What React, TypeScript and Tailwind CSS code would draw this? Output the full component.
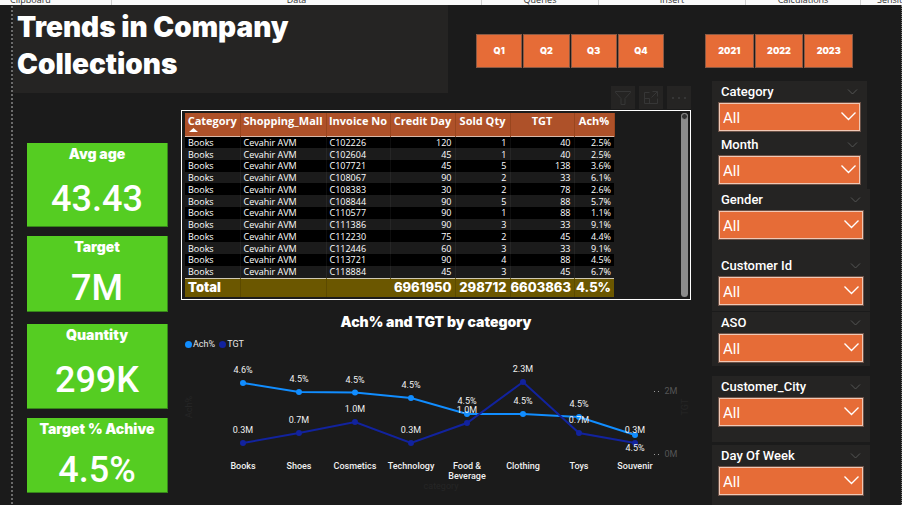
import React from "react";

const ribbonGroups = [
  { label: "Clipboard", box: "w-28 pl-[10px] border-r" },
  { label: "Data", box: "w-[370px] justify-center border-r" },
  { label: "Queries", box: "w-[117px] justify-center border-r" },
  { label: "Insert", box: "w-[147px] justify-center border-r" },
  { label: "Calculations", box: "w-[115px] justify-center border-r" },
  { label: "Sensitivity", box: "flex-1 pl-4" },
];

const cards = [
  { label: "Avg age", value: "43.43", box: "h-[84px]", gap: "pt-[10px]" },
  { label: "Target", value: "7M", box: "mt-[9px] h-[76px]", gap: "pt-[6px]" },
  { label: "Quantity", value: "299K", box: "mt-3 h-[85px]", gap: "pt-[10px]" },
  { label: "Target % Achive", value: "4.5%", box: "mt-[9px] h-[75px]", gap: "pt-[6px]" },
];

const filters = [
  { label: "Category", panel: "w-[155px] pb-[3px]" },
  { label: "Month", panel: "w-[155px] pb-[5px]" },
  { label: "Gender", panel: "w-[158px] pb-4" },
  { label: "Customer Id", panel: "w-[158px] pb-[6px]" },
  { label: "ASO", panel: "mt-px w-[158px] pb-1" },
  { label: "Customer_City", panel: "mt-[10px] w-[158px] pb-4" },
  { label: "Day Of Week", panel: "mt-[3px] w-[158px] pb-[10px]" },
];

const rows: [string, number, number, number, string][] = [
  ["C102226", 120, 1, 40, "2.5%"],
  ["C102604", 45, 1, 40, "2.5%"],
  ["C107721", 45, 5, 138, "3.6%"],
  ["C108067", 90, 2, 33, "6.1%"],
  ["C108383", 30, 2, 78, "2.6%"],
  ["C108844", 90, 5, 88, "5.7%"],
  ["C110577", 90, 1, 88, "1.1%"],
  ["C111386", 90, 3, 33, "9.1%"],
  ["C112230", 75, 2, 45, "4.4%"],
  ["C112446", 60, 3, 33, "9.1%"],
  ["C113721", 90, 4, 88, "4.5%"],
  ["C118884", 45, 3, 45, "6.7%"],
];

type Point = { name: string[]; x: number; ach: number; achLabel: string; achY: number; tgt: number; tgtLabel: string; tgtY: number };

const points: Point[] = [
  { name: ["Books"], x: 62, ach: 31, achLabel: "4.6%", achY: 21, tgt: 91, tgtLabel: "0.3M", tgtY: 81 },
  { name: ["Shoes"], x: 118, ach: 40, achLabel: "4.5%", achY: 30, tgt: 81, tgtLabel: "0.7M", tgtY: 71 },
  { name: ["Cosmetics"], x: 174, ach: 40.5, achLabel: "4.5%", achY: 31, tgt: 70, tgtLabel: "1.0M", tgtY: 60 },
  { name: ["Technology"], x: 230, ach: 46, achLabel: "4.5%", achY: 36, tgt: 91, tgtLabel: "0.3M", tgtY: 81 },
  { name: ["Food &", "Beverage"], x: 286, ach: 62, achLabel: "4.5%", achY: 52, tgt: 71, tgtLabel: "1.0M", tgtY: 61 },
  { name: ["Clothing"], x: 342, ach: 62, achLabel: "4.5%", achY: 52, tgt: 30, tgtLabel: "2.3M", tgtY: 20 },
  { name: ["Toys"], x: 398, ach: 65, achLabel: "4.5%", achY: 55, tgt: 81, tgtLabel: "0.7M", tgtY: 71 },
  { name: ["Souvenir"], x: 454, ach: 83, achLabel: "4.5%", achY: 99, tgt: 91, tgtLabel: "0.3M", tgtY: 81 },
];

function Ribbon() {
  return (
    <header className="flex h-[5px] items-end overflow-hidden bg-[#fafafa] font-['Open_Sans',sans-serif] text-[9px] leading-[10px] text-[#333]">
      {ribbonGroups.map((g) => (
        <div key={g.label} className={`flex shrink-0 whitespace-nowrap border-[#cfcfcf] ${g.box}`}>
          {g.label}
        </div>
      ))}
    </header>
  );
}

function Tile({ label }: { label: string }) {
  return (
    <button className="h-[34px] border border-[#8a5a45] bg-[#e66c37] font-['Inter',sans-serif] text-[9px] font-black text-white">
      {label}
    </button>
  );
}

function VisualActions() {
  const box = "flex h-[23px] w-6 items-center justify-center bg-[#252423]";
  return (
    <div className="mr-[14px] flex gap-1 self-end text-[#363636]">
      <button className={box} aria-label="Filters">
        <svg width="18" height="16" viewBox="0 0 18 16" fill="none" stroke="currentColor">
          <path d="M1.5 1.5h15v1L11 8.500v6H7v-6L1.500 2.500z" />
        </svg>
      </button>
      <button className={box} aria-label="Focus mode">
        <svg width="16" height="16" viewBox="0 0 16 16" fill="none" stroke="currentColor">
          <path d="M6.500 2.500h-5v11h13v-5M1.500 8.500h5v5M9.500 1.500h5v5M14.500 1.500l-6 6" />
        </svg>
      </button>
      <button className={box} aria-label="More options">
        <svg width="16" height="4" viewBox="0 0 16 4" fill="currentColor">
          <rect x="1" y="1" width="2" height="2" />
          <rect x="7" y="1" width="2" height="2" />
          <rect x="13" y="1" width="2" height="2" />
        </svg>
      </button>
    </div>
  );
}

function Card({ label, value, box, gap }: { label: string; value: string; box: string; gap: string }) {
  return (
    <div className={`border-b border-r border-[#37861a] bg-[#55cd22] text-center text-white ${box}`}>
      <h3 className="whitespace-nowrap font-['Inter',sans-serif] text-[14px] font-black leading-[21px]">{label}</h3>
      <p className={`font-['Roboto',sans-serif] text-[36px] font-medium leading-[51px] ${gap}`}>{value}</p>
    </div>
  );
}

function CollectionsTable() {
  const num = "pr-[3px] text-right";
  const line = "border-r border-white/5";
  return (
    <section className="mr-[14px] flex h-[190px] justify-between border border-white py-[2px] pl-[3px] pr-[2px]">
      <table className="h-[184px] w-[429px] table-fixed border-collapse font-['Open_Sans',sans-serif] text-white">
        <colgroup>
          <col className="w-[55px]" />
          <col className="w-[86px]" />
          <col className="w-[64px]" />
          <col className="w-[65px]" />
          <col className="w-[55px]" />
          <col className="w-[64px]" />
          <col className="w-[40px]" />
        </colgroup>
        <thead>
          <tr className="h-[23px] whitespace-nowrap border-b border-[#d9b8a8] bg-[#ae5129] align-top text-[11px] leading-[15px]">
            {["Category", "Shopping_Mall", "Invoice No", "Credit Day", "Sold Qty", "TGT", "Ach%"].map((h, i) => (
              <th key={h} scope="col" className="border-r border-[#99461f] px-[2px] font-bold">
                {h}
                {i === 0 && (
                  <svg className="ml-[2px] block" width="9" height="4" viewBox="0 0 9 4" fill="white">
                    <path d="M0 4L4.500 0L9 4z" />
                  </svg>
                )}
              </th>
            ))}
          </tr>
        </thead>
        <tbody className="text-[9px] font-medium leading-[11px]">
          {rows.map(([invoice, days, qty, tgt, ach]) => (
            <tr key={invoice} className="odd:bg-black">
              <td className={`pl-[3px] ${line}`}>Books</td>
              <td className={`pl-[3px] ${line}`}>Cevahir AVM</td>
              <td className={`pl-[3px] ${line}`}>{invoice}</td>
              <td className={`${num} ${line}`}>{days}</td>
              <td className={`${num} ${line}`}>{qty}</td>
              <td className={`${num} ${line}`}>{tgt}</td>
              <td className={num}>{ach}</td>
            </tr>
          ))}
        </tbody>
        <tfoot>
          <tr className="h-[19px] border-t border-[#cfc9b4] bg-[#6b5700] font-['Inter',sans-serif] text-[13px] leading-[17px]">
            <th scope="row" className="border-r border-[#5c4a00] pl-[3px] text-left font-black">Total</th>
            <td className="border-r border-[#5c4a00]" />
            <td />
            <td className={`border-r border-[#5c4a00] font-extrabold ${num}`}>6961950</td>
            <td className={`border-r border-[#5c4a00] font-extrabold ${num}`}>298712</td>
            <td className={`border-r border-[#5c4a00] font-extrabold ${num}`}>6603863</td>
            <td className={`font-extrabold ${num}`}>4.5%</td>
          </tr>
        </tfoot>
      </table>
      <div className="w-[7px] rounded-full bg-[#8c8c8c]">
        <div className="h-[7px] rounded-full border border-[#8c8c8c] bg-[#333]" />
      </div>
    </section>
  );
}

function TrendChart() {
  return (
    <section className="mr-[14px] pt-3">
      <h2 className="text-center font-['Inter',sans-serif] text-[14px] font-black leading-5 text-white">
        Ach% and TGT by category
      </h2>
      <div className="mt-[6px] flex gap-1 pl-1 font-['Roboto',sans-serif] text-[9px] leading-3 text-[#e6e6e6]">
        <span className="flex items-center gap-px">
          <i className="size-[7px] rounded-full bg-[#118dff]" />
          Ach%
        </span>
        <span className="flex items-center gap-px">
          <i className="size-[7px] rounded-full bg-[#12239e]" />
          TGT
        </span>
      </div>
      <svg className="mt-[2px] block w-full" viewBox="0 0 510 140" fontFamily="Roboto, sans-serif" fontSize="9" textAnchor="middle">
        <g fill="#262626">
          <text transform="translate(11 55) rotate(-90)">Ach%</text>
          <text transform="translate(507 55) rotate(-90)">TGT</text>
          <text x="260" y="137">category</text>
        </g>
        <g fill="#555555">
          <text x="490" y="42">2M</text>
          <text x="490" y="105">0M</text>
        </g>
        <path d="M473 39.500h6M473 102.500h6" stroke="#9a9a9a" strokeDasharray="1 3" />
        <polyline fill="none" stroke="#118dff" strokeWidth="2" points={points.map((p) => `${p.x},${p.ach}`).join(" ")} />
        {points.map((p) => (
          <circle key={p.x} cx={p.x} cy={p.ach} r="3" fill="#118dff" />
        ))}
        <polyline fill="none" stroke="#12239e" strokeWidth="2" points={points.map((p) => `${p.x},${p.tgt}`).join(" ")} />
        {points.map((p) => (
          <circle key={p.x} cx={p.x} cy={p.tgt} r="3" fill="#12239e" />
        ))}
        {points.map((p) => (
          <g key={p.x} fill="#f0f0f0">
            <text x={p.x} y={p.achY}>{p.achLabel}</text>
            <text x={p.x} y={p.tgtY}>{p.tgtLabel}</text>
            {p.name.map((word, i) => (
              <text key={word} x={p.x} y={117 + i * 10} fontWeight="500">{word}</text>
            ))}
          </g>
        ))}
      </svg>
    </section>
  );
}

function Filter({ label, panel }: { label: string; panel: string }) {
  const id = label.replace(/\W/g, "-").toLowerCase();
  return (
    <div className={`bg-[#252423] pl-[7px] pr-[7px] font-['Roboto',sans-serif] text-white ${panel}`}>
      <div className="flex h-[22px] items-center justify-between pl-[2px] pr-[2px]">
        <label htmlFor={id} className="text-[13px] font-medium">{label}</label>
        <svg width="11" height="6" viewBox="0 0 11 6" fill="none" stroke="#555">
          <path d="M1 .5l4.500 4.500L10 .5" />
        </svg>
      </div>
      <div className="relative">
        <select id={id} className="block h-7 w-full appearance-none border border-[#f0c8b5] bg-[#e66c37] pl-[3px] pt-[3px] text-[15px] outline-1 outline-[#6a5147]">
          <option>All</option>
        </select>
        <svg className="pointer-events-none absolute right-1 top-[9px]" width="15" height="9" viewBox="0 0 15 9" fill="none" stroke="white" strokeWidth="1.400">
          <path d="M.5 .5l7 7 7-7" />
        </svg>
      </div>
    </div>
  );
}

export default function App() {
  return (
    <div className="min-h-screen bg-[#1b1b1b]">
      <Ribbon />
      <main className="flex border-r border-dotted border-[#777]">
        <div className="ml-[11px] w-[2px] shrink-0 bg-[repeating-linear-gradient(to_bottom,#1b1b1b_0_1px,#6b6b6b_1px_3px,#1b1b1b_3px_4px)]" />
        <div className="min-w-0 flex-1">
          <div className="flex items-start">
            <h1 className="h-[88px] w-[435px] shrink-0 bg-[#252423] pl-1 pt-1 font-['Inter',sans-serif] text-[28px] font-black leading-[37px] text-white">
              Trends in Company
              <br />
              Collections
            </h1>
            <div className="flex flex-1 flex-col pt-[29px]">
              <div className="ml-7 grid w-[188px] grid-cols-4 gap-px">
                {["Q1", "Q2", "Q3", "Q4"].map((q) => (
                  <Tile key={q} label={q} />
                ))}
              </div>
              <div className="mt-[18px] flex flex-col">
                <VisualActions />
              </div>
            </div>
          </div>
          <div className="flex">
            <div className="ml-[14px] w-[141px] shrink-0 pt-[34px]">
              {cards.map((c) => (
                <Card key={c.label} {...c} />
              ))}
            </div>
            <div className="ml-[13px] min-w-0 flex-1 pt-px">
              <CollectionsTable />
              <TrendChart />
            </div>
          </div>
        </div>
        <aside className="w-[196px] shrink-0 pt-[29px]">
          <div className="grid w-[148px] grid-cols-3 gap-px">
            {["2021", "2022", "2023"].map((y) => (
              <Tile key={y} label={y} />
            ))}
          </div>
          <div className="ml-[7px] mt-[13px]">
            {filters.map((f) => (
              <Filter key={f.label} {...f} />
            ))}
          </div>
        </aside>
      </main>
    </div>
  );
}
